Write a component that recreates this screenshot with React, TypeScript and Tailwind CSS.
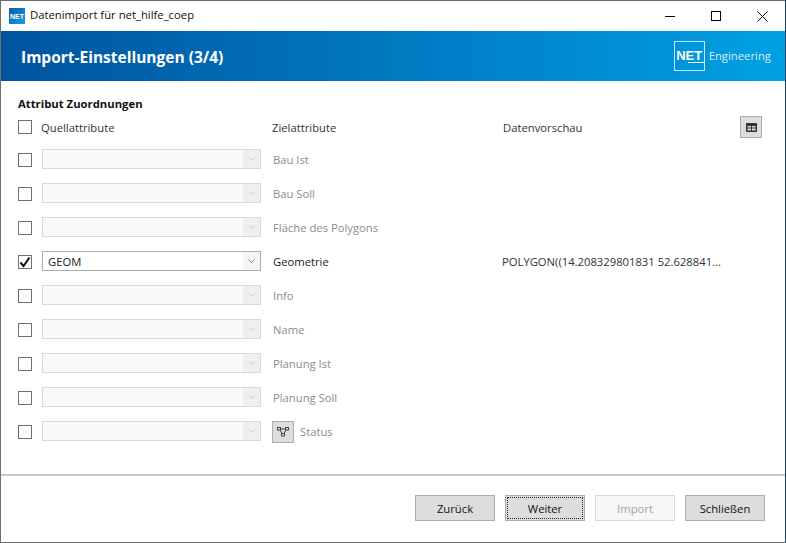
import React from "react";

function Check({ on = false }: { on?: boolean }) {
  return (
    <div className="w-[14px] h-[14px] border border-[#707070] bg-white shrink-0 flex items-center justify-center">
      {on && (
        <svg width="12" height="12" viewBox="0 0 12 12">
          <path d="M1.5 6.5 L4.5 10 L10.5 1.5" fill="none" stroke="#111" strokeWidth="2" />
        </svg>
      )}
    </div>
  );
}

function Chevron({ color }: { color: string }) {
  return (
    <svg width="7" height="4" viewBox="0 0 7 4">
      <path d="M0.5 0.5 L3.5 3.5 L6.5 0.5" fill="none" stroke={color} strokeWidth="1" />
    </svg>
  );
}

function Combo({ value }: { value?: string }) {
  const enabled = !!value;
  return (
    <div
      className={
        enabled
          ? "w-[219px] h-[20px] ml-[10px] mb-[2px] border border-[#acacac] bg-white flex shrink-0"
          : "w-[219px] h-[20px] ml-[10px] mb-[2px] border border-[#d9d9d9] bg-[#f9f9f9] flex shrink-0"
      }
    >
      <div className="flex-1 pl-[5px] leading-[19px] text-[#1a1a1a]">{value}</div>
      <div
        className={
          enabled
            ? "w-[17px] flex items-center justify-center bg-[#f4f4f4]"
            : "w-[17px] flex items-center justify-center bg-[#efefef]"
        }
      >
        <Chevron color={enabled ? "#8a8a8a" : "#c8c8c8"} />
      </div>
    </div>
  );
}

function Row({
  label,
  value,
  preview,
  icon,
}: {
  label: string;
  value?: string;
  preview?: string;
  icon?: boolean;
}) {
  return (
    <div className="h-[34px] flex items-center">
      <Check on={!!value} />
      <Combo value={value} />
      <div className="ml-[11px] w-[230px] flex items-center shrink-0">
        {icon ? (
          <div className="w-[22px] h-[22px] mr-[6px] border border-[#adadad] bg-[#dddddd] flex items-center justify-center">
            <svg width="12" height="10" viewBox="0 0 12 10" fill="none" stroke="#444" strokeWidth="1">
              <rect x="0.5" y="0.5" width="3" height="2.5" />
              <rect x="8.5" y="0.5" width="3" height="2.5" />
              <rect x="4.5" y="6.5" width="3" height="2.5" />
              <path d="M3.5 2 H8.5 M3 3 L5 6.5 M9 3 L7 6.5" />
            </svg>
          </div>
        ) : (
          <div className="w-[1px]" />
        )}
        <span className={value ? "text-[#1a1a1a] pt-[1px]" : "text-[#8c8c8c] pt-[1px]"}>{label}</span>
      </div>
      <span className="text-[#333333] whitespace-nowrap">{preview}</span>
    </div>
  );
}

function Btn({ children, focus, disabled }: { children: string; focus?: boolean; disabled?: boolean }) {
  return (
    <div
      className={
        disabled
          ? "w-[80px] h-[26px] pt-[2px] border border-[#d9d9d9] bg-[#f7f7f7] text-[#a3a3a3] flex items-center justify-center"
          : "w-[80px] h-[26px] pt-[2px] border border-[#adadad] bg-[#dddddd] text-[#111111] flex items-center justify-center relative"
      }
    >
      {children}
      {focus && <div className="absolute inset-[1px] border border-dotted border-[#222222]" />}
    </div>
  );
}

export default function App() {
  return (
    <div
      className="w-[786px] h-[543px] bg-white flex flex-col overflow-hidden border border-t-[#5f6b74] border-l-[#6e6e6e] border-b-[#6e6e6e] border-r-[#1c4668] text-[11.25px]"
      style={{ fontFamily: '"Open Sans", "Noto Sans", sans-serif' }}
    >
      <div className="h-[30px] flex items-center shrink-0">
        <div
          className="ml-[8px] w-[16px] h-[16px] bg-gradient-to-br from-[#0a5ca8] to-[#1b9ee0] flex items-center justify-center text-white text-[7px] font-bold leading-none"
          style={{ fontFamily: '"Liberation Sans", sans-serif' }}
        >
          NET
        </div>
        <span className="ml-[5px] mb-[2px] text-[11.3px] text-[#111111]">Datenimport für net_hilfe_coep</span>
        <div className="ml-auto flex items-center">
          <div className="w-[46px] h-[30px] flex items-center justify-center">
            <div className="w-[10px] h-[1px] bg-black" />
          </div>
          <div className="w-[46px] h-[30px] flex items-center justify-center">
            <div className="w-[10px] h-[10px] border border-black" />
          </div>
          <div className="w-[46px] h-[30px] flex items-center justify-center">
            <svg width="11" height="11" viewBox="0 0 11 11">
              <path d="M0.5 0.5 L10.5 10.5 M10.5 0.5 L0.5 10.5" stroke="#111" strokeWidth="1" fill="none" />
            </svg>
          </div>
        </div>
      </div>

      <div className="h-[50px] shrink-0 flex items-center bg-gradient-to-r from-[#00549e] to-[#00a0e4] pl-[20px] pr-[14px]">
        <span className="text-white text-[15.5px] font-bold pt-[4px]">Import-Einstellungen (3/4)</span>
        <div className="ml-auto flex items-center">
          <div className="w-[31px] h-[30px] border border-[#cfe9f8] flex flex-col items-center justify-center text-white">
            <span
              className="text-[13px] font-bold leading-[13px]"
              style={{ fontFamily: '"Liberation Sans", sans-serif' }}
            >
              NET
            </span>
            <div className="w-[16px] h-[1px] bg-white self-end" />
          </div>
          <span className="ml-[4px] text-[11.3px] text-[#d8effb]">Engineering</span>
        </div>
      </div>

      <div className="flex-1 pl-[17px] pr-[23px] pt-[16px]">
        <div className="h-[14px] leading-[14px] font-bold text-[11.3px] text-[#111111]">Attribut Zuordnungen</div>
        <div className="h-[22px] mt-[5px] flex items-center text-[#333333]">
          <Check />
          <span className="ml-[9px] w-[231px] shrink-0 pt-[3px]">Quellattribute</span>
          <span className="w-[231px] shrink-0 pt-[3px]">Zielattribute</span>
          <span className="pt-[3px]">Datenvorschau</span>
          <div className="ml-auto w-[22px] h-[22px] border border-[#adadad] bg-[#dddddd] flex items-center justify-center">
            <svg width="11" height="9" viewBox="0 0 11 9">
              <rect x="0" y="0" width="11" height="9" rx="1" fill="#333" />
              <rect x="1.5" y="3" width="3.5" height="1.5" fill="#ddd" />
              <rect x="6" y="3" width="3.5" height="1.5" fill="#ddd" />
              <rect x="1.5" y="5.5" width="3.5" height="2" fill="#ddd" />
              <rect x="6" y="5.5" width="3.5" height="2" fill="#ddd" />
            </svg>
          </div>
        </div>
        <div className="mt-[5px]">
          <Row label="Bau Ist" />
          <Row label="Bau Soll" />
          <Row label="Fläche des Polygons" />
          <Row label="Geometrie" value="GEOM" preview="POLYGON((14.208329801831 52.628841..." />
          <Row label="Info" />
          <Row label="Name" />
          <Row label="Planung Ist" />
          <Row label="Planung Soll" />
          <Row label="Status" icon />
        </div>
      </div>

      <div className="h-[68px] shrink-0 border-t-2 border-[#c9c9c9] flex items-start justify-end gap-[10px] pt-[19px] pr-[20px]">
        <Btn>Zurück</Btn>
        <Btn focus>Weiter</Btn>
        <Btn disabled>Import</Btn>
        <Btn>Schließen</Btn>
      </div>
    </div>
  );
}
